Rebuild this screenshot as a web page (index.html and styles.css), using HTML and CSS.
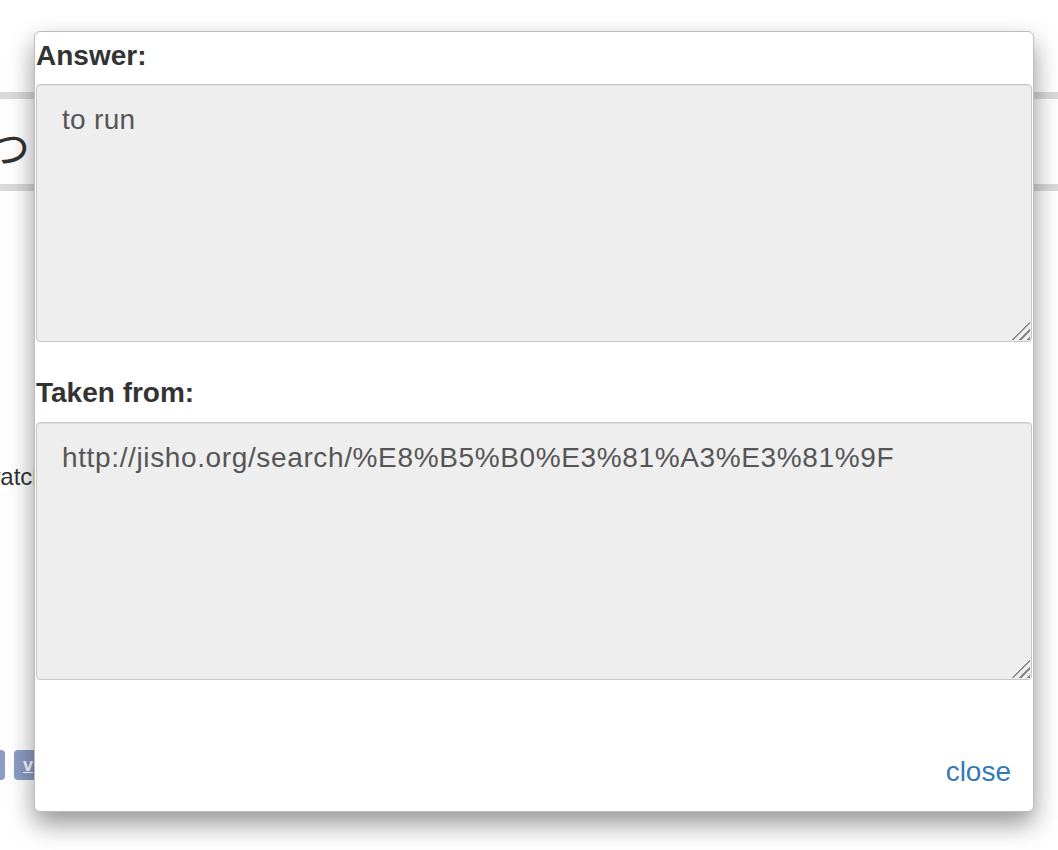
FILE: index.html
```html
<!DOCTYPE html>
<html>
<head>
<meta charset="utf-8">
<link rel="stylesheet" href="styles.css">
</head>
<body>
<div class="page">
  <div class="bar"></div>
  <div class="hero"><span class="kana">つ</span></div>
  <div class="bar"></div>
  <p class="word">watch</p>
  <div class="share"><span class="btn"></span><span class="btn"><u>v</u></span></div>
</div>
<div class="modal">
  <label class="lbl">Answer:</label>
  <div class="field-wrap">
    <textarea class="field" readonly>to run</textarea>
  </div>
  <label class="lbl lbl-2">Taken from:</label>
  <div class="field-wrap">
    <textarea class="field field-url" readonly>http://jisho.org/search/%E8%B5%B0%E3%81%A3%E3%81%9F</textarea>
  </div>
  <div class="footer"><a class="close" href="#">close</a></div>
</div>
</body>
</html>
```
FILE: styles.css
```css
html, body {
  margin: 0;
  padding: 0;
  background: #fff;
  font-family: "Liberation Sans", Arial, "Noto Sans CJK JP", sans-serif;
  overflow: hidden;
}
.page {
  padding-top: 92px;
  height: 850px;
  box-sizing: border-box;
}
.bar {
  height: 7px;
  background: #d9d9d9;
}
.hero {
  height: 85px;
  display: flex;
  align-items: center;
  padding-top: 8px;
  box-sizing: border-box;
}
.kana {
  font-family: "Noto Sans CJK JP", sans-serif;
  font-size: 42px;
  font-weight: 400;
  color: #333;
  margin-left: -12px;
}
.word {
  margin: 269px 0 0 -17px;
  font-size: 24px;
  line-height: 34px;
  color: #333;
}
.share {
  display: flex;
  gap: 9px;
  margin: 256px 0 0 -35px;
}
.btn {
  width: 40px;
  height: 30px;
  border-radius: 4px;
  background: #8d9cc4;
  color: #fff;
  font-size: 18px;
  font-weight: bold;
  line-height: 30px;
  text-align: right;
  box-sizing: border-box;
  padding-right: 21px;
}
.modal {
  position: absolute;
  left: 34px;
  top: 31px;
  width: 1000px;
  height: 781px;
  box-sizing: border-box;
  border: 1px solid #bdbdbd;
  border-radius: 6px;
  background: #fff;
  padding: 4px 1px 0;
  display: flex;
  flex-direction: column;
  box-shadow: 0 12px 26px rgba(0, 0, 0, 0.42);
}
.lbl {
  display: block;
  font-weight: bold;
  font-size: 28px;
  line-height: 40px;
  color: #333;
  margin: 0 0 8px;
}
.lbl-2 {
  margin-top: 31px;
  margin-bottom: 9px;
}
.field-wrap {
  position: relative;
}
.field-wrap::after {
  content: "";
  position: absolute;
  right: 2px;
  bottom: 2px;
  width: 19px;
  height: 19px;
  background: repeating-linear-gradient(135deg,
    transparent 0 2.5px,
    #888 2.5px 4.3px,
    transparent 4.3px 5.5px);
  clip-path: polygon(100% 0, 100% 100%, 0 100%);
  pointer-events: none;
}
.field {
  display: block;
  width: 100%;
  height: 258px;
  box-sizing: border-box;
  margin: 0;
  border: 1px solid #c8c8c8;
  border-radius: 4px;
  background: #eee;
  padding: 15px 24px 15px 25px;
  font-family: "Liberation Sans", Arial, sans-serif;
  font-size: 28px;
  line-height: 40px;
  color: #555;
  letter-spacing: 0.3px;
  resize: none;
  outline: none;
  box-shadow: inset 0 1px 1px rgba(0, 0, 0, 0.075);
}
.field-url {
  letter-spacing: 0.63px;
}
.footer {
  margin-top: auto;
  display: flex;
  justify-content: flex-end;
  padding: 0 21px 19px 0;
}
.close {
  font-size: 28px;
  line-height: 40px;
  color: #337ab7;
  text-decoration: none;
}
```
